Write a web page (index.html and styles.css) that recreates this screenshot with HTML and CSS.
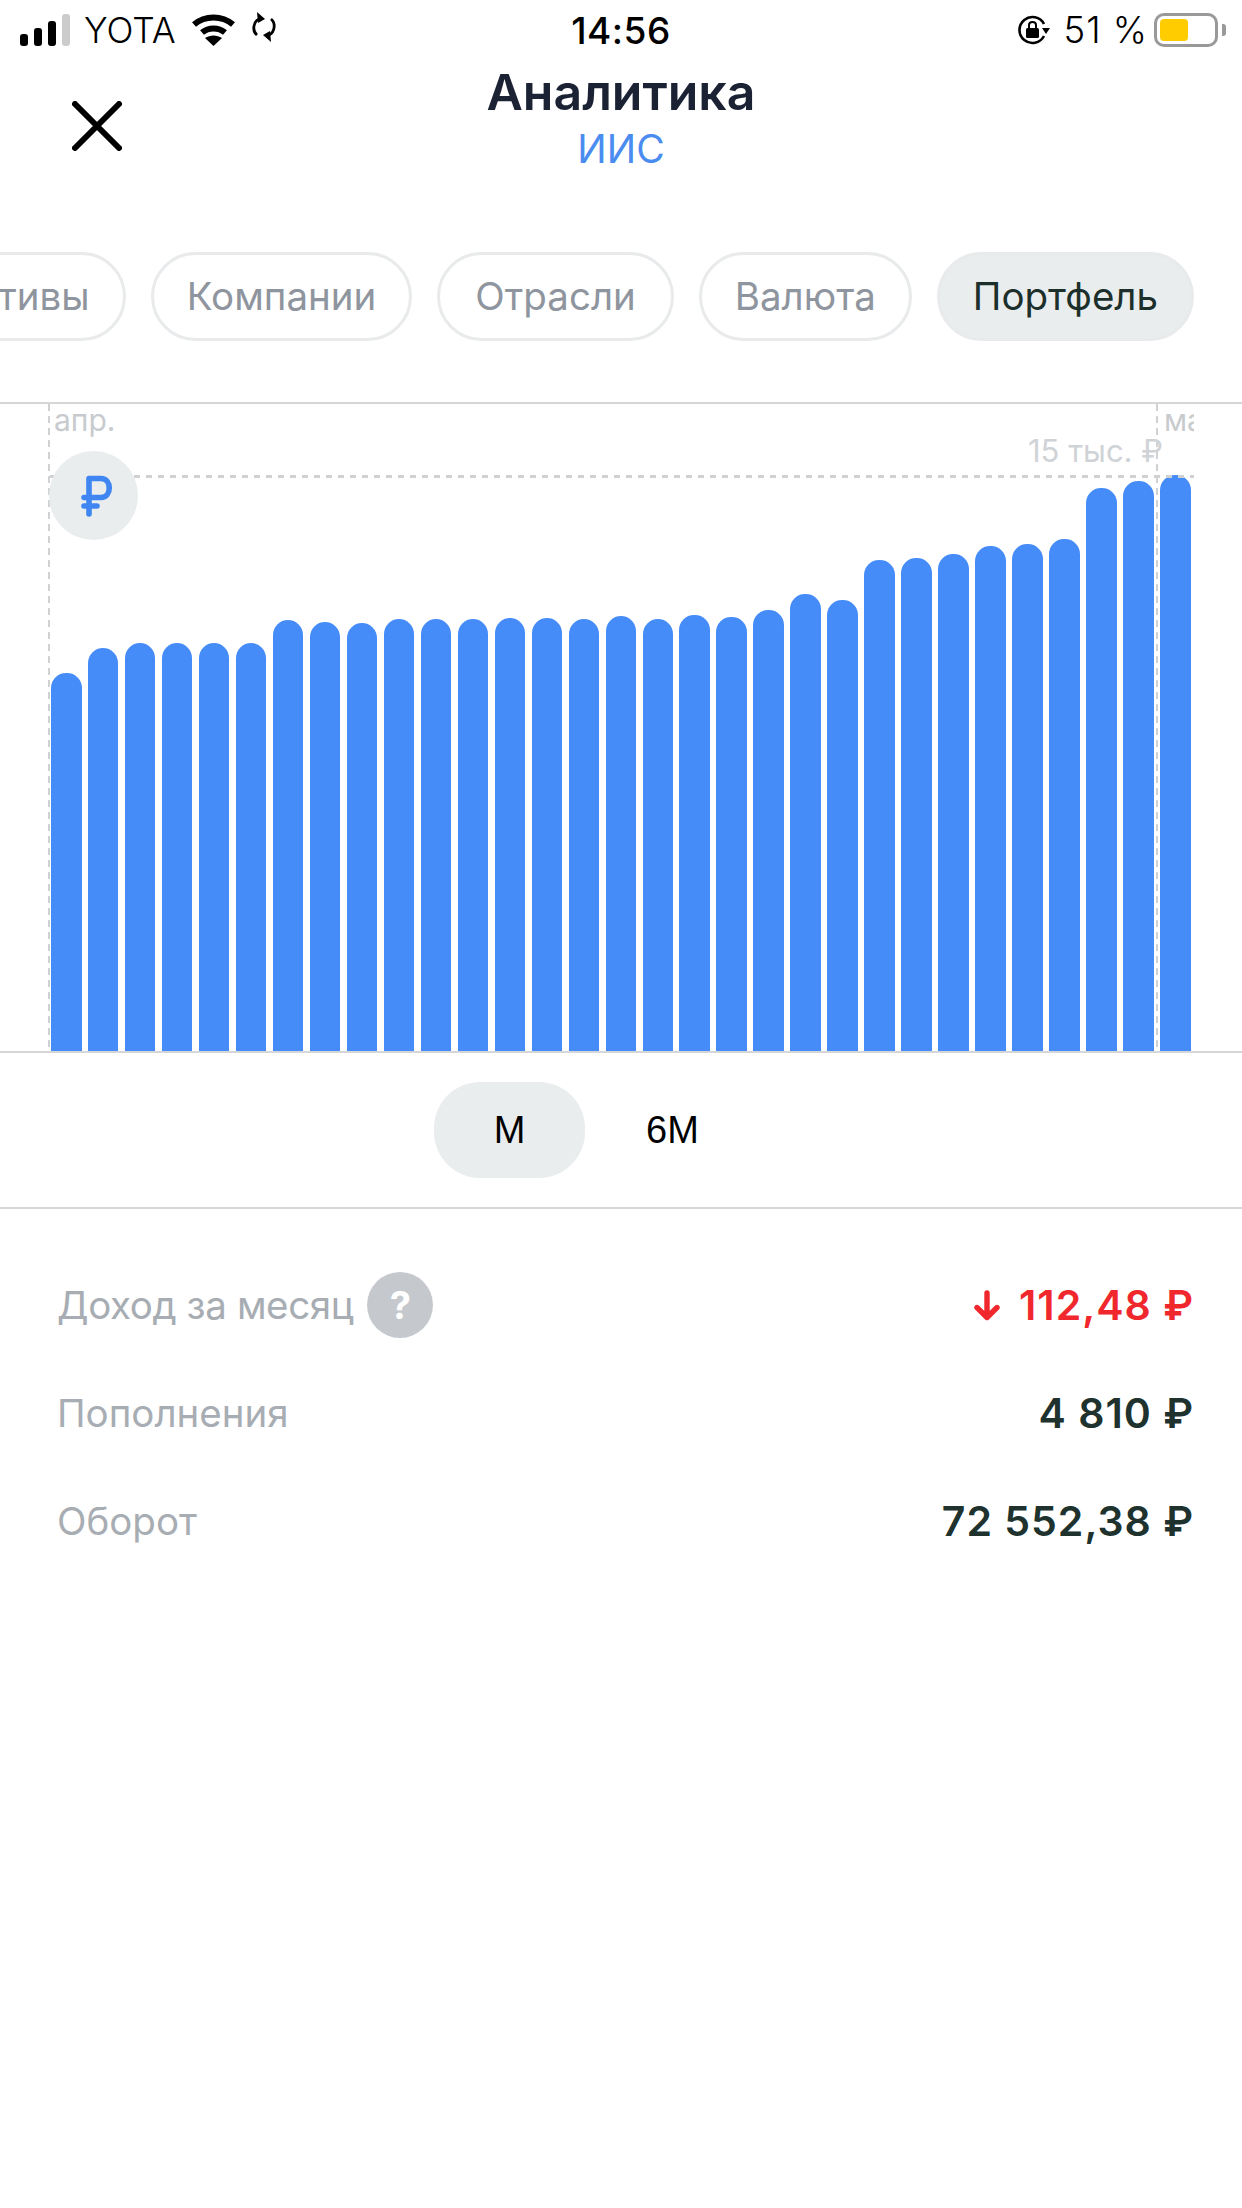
FILE: index.html

```html
<!DOCTYPE html>
<html lang="ru">
<head>
    <meta charset="UTF-8">
    <title>Аналитика</title>
    <link rel="stylesheet" href="styles.css">
</head>
<body>

    <div class="status-bar">
        <div class="status-left">
            <div class="signal">
                <span class="signal-bar s1"></span>
                <span class="signal-bar s2"></span>
                <span class="signal-bar s3"></span>
                <span class="signal-bar s4"></span>
            </div>
            <span class="carrier">YOTA</span>
            <svg class="wifi" viewBox="0 0 45 32">
                <path d="M3 10.5C14 1 31 1 42 10.5" fill="none" stroke="#000" stroke-width="6"/>
                <path d="M11 18.5C17.5 13 27.5 13 34 18.5" fill="none" stroke="#000" stroke-width="6"/>
                <path d="M22.5 32L14 24C19 20.5 26 20.5 31 24Z"/>
            </svg>
            <svg class="sync" viewBox="0 0 26 30">
                <path d="M8 7C2 10 1 19 6 23" fill="none" stroke="#000" stroke-width="2.8"/>
                <path d="M18 23C24 20 25 11 20 7" fill="none" stroke="#000" stroke-width="2.8"/>
                <path d="M6 0L14 7L7 11Z"/>
                <path d="M20 30L12 23L19 19Z"/>
            </svg>
        </div>
        <div class="status-time">14:56</div>
        <div class="status-right">
            <svg class="rotation-lock" viewBox="0 0 33 30">
                <path d="M27 9A13 13 0 1 0 27 21" fill="none" stroke="#000" stroke-width="2.6"/>
                <path d="M25 13H33L29 19Z"/>
                <rect x="9" y="13" width="13" height="10" rx="1.5"/>
                <path d="M12 13V10C12 6 19 6 19 10V13" fill="none" stroke="#000" stroke-width="2"/>
            </svg>
            <span class="battery-text">51 %</span>
            <div class="battery"><div class="battery-level"></div></div>
            <div class="battery-nub"></div>
        </div>
    </div>

    <div class="header">
        <div class="close-col">
            <svg class="close" viewBox="0 0 50 50">
                <path d="M3 3L47 47M47 3L3 47" fill="none" stroke="#000" stroke-width="6" stroke-linecap="round"/>
            </svg>
        </div>
        <div class="title-col">
            <h1>Аналитика</h1>
            <div class="subtitle">ИИС</div>
        </div>
    </div>

    <div class="tabs">
        <div class="tab">Активы</div>
        <div class="tab">Компании</div>
        <div class="tab tab-wide">Отрасли</div>
        <div class="tab">Валюта</div>
        <div class="tab active">Портфель</div>
    </div>

    <div class="chart">
        <div class="bars">
            <div class="bar" style="height:378px"></div>
            <div class="bar" style="height:403px"></div>
            <div class="bar" style="height:408px"></div>
            <div class="bar" style="height:408px"></div>
            <div class="bar" style="height:408px"></div>
            <div class="bar" style="height:408px"></div>
            <div class="bar" style="height:431px"></div>
            <div class="bar" style="height:429px"></div>
            <div class="bar" style="height:428px"></div>
            <div class="bar" style="height:432px"></div>
            <div class="bar" style="height:432px"></div>
            <div class="bar" style="height:432px"></div>
            <div class="bar" style="height:433px"></div>
            <div class="bar" style="height:433px"></div>
            <div class="bar" style="height:432px"></div>
            <div class="bar" style="height:435px"></div>
            <div class="bar" style="height:432px"></div>
            <div class="bar" style="height:436px"></div>
            <div class="bar" style="height:434px"></div>
            <div class="bar" style="height:441px"></div>
            <div class="bar" style="height:457px"></div>
            <div class="bar" style="height:451px"></div>
            <div class="bar" style="height:491px"></div>
            <div class="bar" style="height:493px"></div>
            <div class="bar" style="height:497px"></div>
            <div class="bar" style="height:505px"></div>
            <div class="bar" style="height:507px"></div>
            <div class="bar" style="height:512px"></div>
            <div class="bar" style="height:563px"></div>
            <div class="bar" style="height:570px"></div>
            <div class="bar" style="height:576px"></div>
        </div>
        <div class="grid-v grid-v-left"></div>
        <div class="grid-v grid-v-right"></div>
        <div class="grid-h"></div>
        <div class="month month-left">апр.</div>
        <div class="month month-right">май</div>
        <div class="max-label">15 тыс. ₽</div>
        <div class="currency">
            <svg class="currency-icon" viewBox="0 0 32 42">
                <path d="M8 39V3.5H20C31 3.5 31 22.5 20 22.5H3M3 31H16" fill="none" stroke="#3f86f2" stroke-width="5.6" stroke-linecap="round" stroke-linejoin="round"/>
            </svg>
        </div>
    </div>

    <div class="periods">
        <div class="period active">М</div>
        <div class="period">6М</div>
    </div>

    <div class="stats">
        <div class="stat-row">
            <div class="stat-label stat-label-tight">Доход за месяц<span class="help">?</span></div>
            <div class="stat-value negative">
                <svg class="arrow" viewBox="0 0 26 31">
                    <path d="M13 3V27M3 17.5L13 27.5L23 17.5" fill="none" stroke="#f0282d" stroke-width="5.4" stroke-linecap="round" stroke-linejoin="round"/>
                </svg>
                <span>112,48 ₽</span>
            </div>
        </div>
        <div class="stat-row">
            <div class="stat-label">Пополнения</div>
            <div class="stat-value">4 810 ₽</div>
        </div>
        <div class="stat-row">
            <div class="stat-label">Оборот</div>
            <div class="stat-value">72 552,38 ₽</div>
        </div>
    </div>

</body>
</html>
```

FILE: styles.css

```css
body {
    font-family: Inter, 'Noto Sans', sans-serif;
    background-color: #fff;
    margin: 0;
    width: 1242px;
    height: 2208px;
    overflow: hidden;
    color: #000;
}

.status-bar {
    display: grid;
    grid-template-columns: 1fr auto 1fr;
    align-items: center;
    height: 60px;
    padding: 0 16px 0 20px;
    box-sizing: border-box;
}

.status-left {
    display: flex;
    align-items: center;
}

.signal {
    display: flex;
    align-items: flex-end;
    gap: 6px;
    height: 32px;
}

.signal-bar {
    width: 8px;
    background: #000;
    border-radius: 3px;
}

.s1 { height: 12px; }
.s2 { height: 18px; }
.s3 { height: 25px; }
.s4 { height: 32px; background: #ccc; }

.carrier {
    font-size: 35.5px;
    font-weight: 300;
    margin-left: 14px;
}

.wifi {
    width: 45px;
    height: 32px;
    margin-left: 15px;
}

.sync {
    width: 26px;
    height: 30px;
    margin-left: 15px;
    margin-bottom: 6px;
}

.status-time {
    font-size: 37px;
    font-weight: 500;
    letter-spacing: 0.5px;
    margin-right: 4px;
}

.status-right {
    display: flex;
    align-items: center;
    justify-content: flex-end;
}

.rotation-lock {
    width: 33px;
    height: 30px;
}

.battery-text {
    font-size: 36.5px;
    font-weight: 300;
    letter-spacing: 1px;
    margin-left: 14px;
}

.battery {
    width: 64px;
    height: 34px;
    margin-left: 6px;
    border: 3px solid #999;
    border-radius: 10px;
    box-sizing: border-box;
    padding: 3px;
}

.battery-level {
    width: 28px;
    height: 100%;
    background: #ffcc00;
    border-radius: 4px;
}

.battery-nub {
    width: 4px;
    height: 12px;
    margin-left: 4px;
    background: #999;
    border-radius: 0 3px 3px 0;
}

.header {
    display: grid;
    grid-template-columns: 1fr auto 1fr;
    height: 110px;
}

.close-col {
    padding: 41px 0 0 72px;
}

.close {
    width: 50px;
    height: 50px;
    display: block;
}

h1 {
    margin: 0;
    font-size: 50px;
    font-weight: 600;
    line-height: 64px;
    color: #1a2233;
    text-align: center;
}

.subtitle {
    font-size: 39px;
    line-height: 50px;
    color: #4a8cf0;
    text-align: center;
}

.tabs {
    display: flex;
    justify-content: flex-end;
    gap: 25px;
    margin-top: 82px;
    padding-right: 48px;
}

.tab {
    flex: none;
    height: 89px;
    line-height: 83px;
    padding: 0 33px;
    border: 3px solid #e8eaeb;
    border-radius: 45px;
    box-sizing: border-box;
    font-size: 38.5px;
    color: #8f959e;
}

.tab-wide {
    padding: 0 35px;
}

.tab.active {
    background: #e9edee;
    color: #1c2f2b;
}

.chart {
    position: relative;
    height: 647px;
    margin-top: 61px;
    border-top: 2px solid #d4d6d8;
    border-bottom: 2px solid #d4d6d8;
}

.bars {
    display: flex;
    align-items: flex-end;
    gap: 6.48px;
    height: 100%;
    padding-left: 51px;
}

.bar {
    flex: none;
    width: 30.5px;
    background: #458cf9;
    border-radius: 15px 15px 0 0;
}

.grid-v {
    position: absolute;
    top: 0;
    bottom: 0;
    width: 2px;
    background: repeating-linear-gradient(to bottom, #cfd1d3 0 7px, transparent 7px 12px);
}

.grid-v-left { left: 48px; }
.grid-v-right { left: 1156px; }

.grid-h {
    position: absolute;
    top: 71px;
    left: 50px;
    width: 1144px;
    height: 3px;
    background: repeating-linear-gradient(to right, #cfd1d3 0 6px, transparent 6px 12px);
}

.month {
    position: absolute;
    top: -1px;
    font-size: 30px;
    line-height: 34px;
    color: #c8cbce;
}

.month-left { left: 54px; }

.month-right {
    left: 1164px;
    width: 30px;
    overflow: hidden;
}

.max-label {
    position: absolute;
    top: 29px;
    right: 79px;
    font-size: 31px;
    line-height: 36px;
    color: #d0d3d6;
}

.currency {
    position: absolute;
    top: 47px;
    left: 49px;
    display: flex;
    align-items: center;
    justify-content: center;
    width: 89px;
    height: 89px;
    background: #e9edee;
    border-radius: 50%;
}

.currency-icon {
    width: 32px;
    height: 42px;
    margin-left: 6px;
}

.periods {
    display: flex;
    align-items: center;
    gap: 12px;
    height: 154px;
    padding-left: 434px;
    border-bottom: 2px solid #d4d6d8;
}

.period {
    width: 151px;
    height: 96px;
    line-height: 96px;
    text-align: center;
    border-radius: 46px;
    font-family: 'Liberation Sans', sans-serif;
    font-size: 38px;
}

.period.active {
    background: #e9edee;
}

.stats {
    padding: 42px 48px 0 57px;
}

.stat-row {
    display: flex;
    align-items: center;
    justify-content: space-between;
    height: 108px;
}

.stat-label {
    display: flex;
    align-items: center;
    gap: 14px;
    font-size: 38.5px;
    color: #a7adb3;
}

.stat-label-tight {
    letter-spacing: -0.4px;
}

.help {
    width: 66px;
    height: 66px;
    line-height: 66px;
    text-align: center;
    border-radius: 50%;
    background: #c5c9ce;
    color: #fff;
    font-weight: 700;
    font-size: 38px;
}

.stat-value {
    display: flex;
    align-items: center;
    gap: 19px;
    font-size: 41px;
    font-weight: 600;
    letter-spacing: 1px;
    color: #20322e;
}

.stat-value.negative {
    color: #f0282d;
}

.arrow {
    width: 26px;
    height: 31px;
}
```
